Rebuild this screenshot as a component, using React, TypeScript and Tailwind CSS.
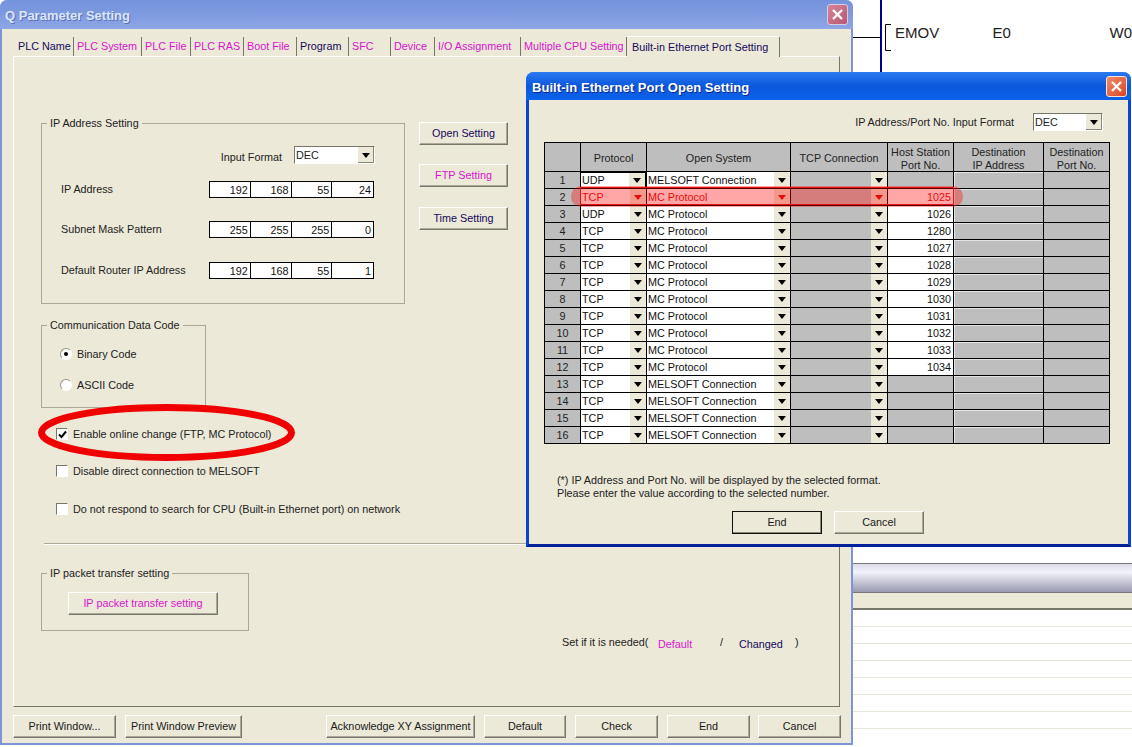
import type { ReactNode } from 'react';

const MAGENTA = 'text-[#d914cf]';
const NAVY = 'text-[#14085c]';

const tabs = [
  { label: 'PLC Name', w: 'w-[59px]', color: NAVY },
  { label: 'PLC System', w: 'w-[68px]', color: MAGENTA },
  { label: 'PLC File', w: 'w-[49px]', color: MAGENTA },
  { label: 'PLC RAS', w: 'w-[53px]', color: MAGENTA },
  { label: 'Boot File', w: 'w-[53px]', color: MAGENTA },
  { label: 'Program', w: 'w-[52px]', color: NAVY },
  { label: 'SFC', w: 'w-[42px]', color: MAGENTA },
  { label: 'Device', w: 'w-[44px]', color: MAGENTA },
  { label: 'I/O Assignment', w: 'w-[86px]', color: MAGENTA },
  { label: 'Multiple CPU Setting', w: 'w-[106px]', color: MAGENTA },
];

const ipRows = [
  { label: 'IP Address', values: ['192', '168', '55', '24'], mt: 'mt-[17px]' },
  { label: 'Subnet Mask Pattern', values: ['255', '255', '255', '0'], mt: 'mt-[23px]' },
  { label: 'Default Router IP Address', values: ['192', '168', '55', '1'], mt: 'mt-[24px]' },
];

const ports = [
  { proto: 'UDP', open: 'MELSOFT Connection', port: '' },
  { proto: 'TCP', open: 'MC Protocol', port: '1025' },
  { proto: 'UDP', open: 'MC Protocol', port: '1026' },
  { proto: 'TCP', open: 'MC Protocol', port: '1280' },
  { proto: 'TCP', open: 'MC Protocol', port: '1027' },
  { proto: 'TCP', open: 'MC Protocol', port: '1028' },
  { proto: 'TCP', open: 'MC Protocol', port: '1029' },
  { proto: 'TCP', open: 'MC Protocol', port: '1030' },
  { proto: 'TCP', open: 'MC Protocol', port: '1031' },
  { proto: 'TCP', open: 'MC Protocol', port: '1032' },
  { proto: 'TCP', open: 'MC Protocol', port: '1033' },
  { proto: 'TCP', open: 'MC Protocol', port: '1034' },
  { proto: 'TCP', open: 'MELSOFT Connection', port: '' },
  { proto: 'TCP', open: 'MELSOFT Connection', port: '' },
  { proto: 'TCP', open: 'MELSOFT Connection', port: '' },
  { proto: 'TCP', open: 'MELSOFT Connection', port: '' },
];

const Arrow = ({ red }: { red?: boolean }) => (
  <svg width="8" height="5" viewBox="0 0 8 5" className={red ? 'text-[#e01010]' : 'text-black'}>
    <path d="M0 0h8L4 5z" fill="currentColor" />
  </svg>
);

const Close = ({ active }: { active?: boolean }) => (
  <div
    className={`flex h-[21px] w-[21px] items-center justify-center rounded-[3px] border ${
      active
        ? 'border-[#f4e4dc] bg-gradient-to-br from-[#f08a68] to-[#d9431f]'
        : 'border-[#d9cbe0] bg-gradient-to-br from-[#d4869a] to-[#b8566f]'
    }`}
  >
    <svg width="13" height="13" viewBox="0 0 13 13">
      <path d="M2 2l9 9M11 2l-9 9" stroke="white" strokeWidth="2.4" />
    </svg>
  </div>
);

const Btn = ({ w, color, dflt, children }: { w: string; color?: string; dflt?: boolean; children: ReactNode }) => (
  <button
    className={`flex h-[23px] items-center justify-center bg-[#ece9d8] text-[10.8px] ${w} ${color ?? 'text-[#1a1a1a]'} ${
      dflt
        ? 'border border-[#111] shadow-[inset_-1px_-1px_0_#8a8874]'
        : 'border border-t-white border-l-white border-r-[#77766a] border-b-[#77766a] shadow-[inset_-1px_-1px_0_#aca899]'
    }`}
  >
    {children}
  </button>
);

const Group = ({ title, box, children }: { title: string; box: string; children: ReactNode }) => (
  <fieldset className={`border border-[#aaa794] ${box}`}>
    <legend className="ml-[5px] h-[14px] px-[3px] text-[10.8px] leading-[14px] text-[#222]">{title}</legend>
    {children}
  </fieldset>
);

const Combo = ({ w }: { w: string }) => (
  <div className={`flex h-[18px] items-center border border-t-[#77766a] border-l-[#77766a] border-r-white border-b-white bg-white pl-[1px] text-[10.8px] ${w}`}>
    <span className="flex-1">DEC</span>
    <span className="flex h-[16px] w-[16px] items-center justify-center bg-[#ece9d8] shadow-[inset_-1px_-1px_0_#8a8874]">
      <Arrow />
    </span>
  </div>
);

const Check = ({ label, checked, mt }: { label: string; checked?: boolean; mt: string }) => (
  <div className={`ml-[15px] flex h-[14px] items-center gap-[5px] text-[10.8px] text-[#222] ${mt}`}>
    <span className="flex h-[12px] w-[12px] items-center justify-center border border-t-[#77766a] border-l-[#77766a] border-r-white border-b-white bg-white">
      {checked && (
        <svg width="9" height="9" viewBox="0 0 9 9">
          <path d="M1 4.5l2.5 2.5L8 1.5" fill="none" stroke="black" strokeWidth="2" />
        </svg>
      )}
    </span>
    {label}
  </div>
);

const Radio = ({ label, on, mt }: { label: string; on?: boolean; mt: string }) => (
  <div className={`ml-[18px] flex h-[14px] items-center gap-[5px] text-[10.8px] text-[#222] ${mt}`}>
    <span className="flex h-[12px] w-[12px] items-center justify-center rounded-full border border-[#9a988a] border-r-white border-b-white bg-white">
      {on && <span className="h-[4px] w-[4px] rounded-full bg-black" />}
    </span>
    {label}
  </div>
);

const SelectCell = ({ text, grey, red, focus }: { text?: string; grey?: boolean; red?: boolean; focus?: boolean }) => (
  <div className={`flex h-full items-center ${grey ? 'bg-[#bebebe]' : 'bg-white'} ${focus ? 'border-r border-t border-black' : ''}`}>
    <span className={`flex-1 truncate pl-[1px] text-[10.8px] ${red ? 'text-[#e01010]' : 'text-[#111]'}`}>{text}</span>
    <span className="flex h-full w-[16px] items-center justify-center bg-[#ece9d8]">
      <Arrow red={red} />
    </span>
  </div>
);

const headCell = 'flex items-center justify-center bg-[#bebebe] pt-[2px] text-center text-[10.8px] leading-[13px] text-[#222]';
const headCell2 = 'flex items-center justify-center bg-[#bebebe] pt-[3px] text-center text-[10.8px] leading-[13px] text-[#222]';

function PortTable() {
  return (
    <div className="relative ml-[15px] mt-[11px] grid w-[566px] grid-cols-[35px_65px_143px_96px_65px_89px_65px] grid-rows-[28px_repeat(16,16px)] gap-[1px] border border-black bg-black">
      <div className={headCell} />
      <div className={headCell}>Protocol</div>
      <div className={headCell}>Open System</div>
      <div className={headCell}>TCP Connection</div>
      <div className={headCell2}>
        Host Station
        <br />
        Port No.
      </div>
      <div className={headCell2}>
        Destination
        <br />
        IP Address
      </div>
      <div className={headCell2}>
        Destination
        <br />
        Port No.
      </div>
      {ports.map((p, i) => {
        const red = i === 1;
        return (
          <div key={i} className="contents">
            <div className="flex items-center justify-center bg-[#bebebe] pt-[1px] text-[10.8px] text-[#222]">{i + 1}</div>
            <SelectCell text={p.proto} red={red} focus={i === 0} />
            <SelectCell text={p.open} red={red} />
            <SelectCell grey red={red} />
            <div
              className={`flex items-center justify-end pr-[2px] text-[10.8px] ${p.port ? 'bg-white' : 'bg-[#bebebe]'} ${
                red ? 'text-[#e01010]' : 'text-[#111]'
              }`}
            >
              {p.port}
            </div>
            <div className="border-l border-t border-[#e4e4e4] bg-[#bebebe]" />
            <div className="bg-[#bebebe]" />
          </div>
        );
      })}
      {/* red marker laid over row 2 */}
      <div className="pointer-events-none absolute left-[26px] top-[43px] h-[21px] w-[392px] rounded-[10px] bg-[#ff0000]/35" />
      <div className="pointer-events-none absolute left-[35px] top-[44px] h-[18px] w-[374px] border border-[#e81010]" />
    </div>
  );
}

function PortDialog() {
  return (
    <div className="absolute left-[526px] top-[72px] flex h-[475px] w-[605px] flex-col rounded-t-[8px] border-x-[3px] border-b-[3px] border-x-[#0a45cf] border-b-[#00209c] bg-[#ece9d8]">
      <div className="-mx-[3px] flex h-[28px] shrink-0 items-center justify-between rounded-t-[8px] bg-gradient-to-b from-[#2a7af0] via-[#0a58dc] to-[#0c62ea] pl-[6px] pr-[4px]">
        <span className="pt-[4px] text-[13px] font-bold tracking-[0.06px] text-white [text-shadow:1px_1px_0_#0a2a90]">Built-in Ethernet Port Open Setting</span>
        <Close active />
      </div>
      <div className="mt-[13px] flex items-center justify-end gap-[19px] pr-[25px] text-[10.8px] text-[#222]">
        <span className="pt-[1px]">IP Address/Port No. Input Format</span>
        <Combo w="w-[70px]" />
      </div>
      <PortTable />
      <div className="ml-[28px] mt-[30px] text-[10.8px] leading-[13px] text-[#222]">
        <p>(*) IP Address and Port No. will be displayed by the selected format.</p>
        <p>Please enter the value according to the selected number.</p>
      </div>
      <div className="ml-[203px] mt-[11px] flex gap-[12px]">
        <Btn w="w-[90px]" dflt>
          End
        </Btn>
        <Btn w="w-[90px]">Cancel</Btn>
      </div>
    </div>
  );
}

function ParameterWindow() {
  return (
    <div className="absolute left-0 top-0 flex h-[745px] w-[853px] flex-col rounded-t-[7px] border-x-2 border-b-2 border-[#7e93da] bg-[#ece9d8]">
      <div className="-mx-[2px] flex h-[29px] shrink-0 items-center justify-between rounded-t-[7px] bg-gradient-to-b from-[#7393dc] via-[#7f9ae0] to-[#8ea6e6] pl-[5px] pr-[5px]">
        <span className="pt-[2px] text-[13px] font-bold text-[#dce6f8] [text-shadow:1px_1px_0_#5870b8]">Q Parameter Setting</span>
        <Close />
      </div>

      {/* tabs */}
      <div className="ml-[13px] flex h-[27px] shrink-0 items-end">
        {tabs.map(t => (
          <div
            key={t.label}
            className={`flex h-[19px] items-center border-r border-r-[#77766a] pl-[3px] text-[10.8px] ${t.w} ${t.color}`}
          >
            {t.label}
          </div>
        ))}
        <div className={`relative z-10 -mb-[1px] flex h-[21px] w-[153px] items-center rounded-t-[2px] border-r border-t border-r-[#77766a] border-t-white bg-[#ece9d8] pl-[5px] text-[10.8px] ${NAVY}`}>
          Built-in Ethernet Port Setting
        </div>
      </div>

      {/* tab panel */}
      <div className="ml-[11px] flex h-[651px] w-[827px] shrink-0 flex-col border border-t-white border-l-white border-r-[#77766a] border-b-[#77766a] pl-[27px] pt-[59px]">
        <div className="flex items-start gap-[14px]">
          <Group title="IP Address Setting" box="h-[188px] w-[364px]">
            <div className="mt-[16px] flex items-center justify-end gap-[12px] pr-[29px] text-[10.8px] leading-[14px] text-[#222]">
              <span className="pt-[3px]">Input Format</span>
              <Combo w="w-[81px]" />
            </div>
            {ipRows.map(r => (
              <div key={r.label} className={`flex h-[17px] items-center pl-[19px] text-[10.8px] text-[#222] ${r.mt}`}>
                <span className="w-[148px]">{r.label}</span>
                <div className="grid h-full w-[165px] grid-cols-4 border border-black bg-white">
                  {r.values.map((v, i) => (
                    <span key={i} className="border-r border-black pr-[2px] text-right leading-[16px] text-[#111] last:border-r-0">
                      {v}
                    </span>
                  ))}
                </div>
              </div>
            ))}
          </Group>
          <div className="mt-[6px] flex flex-col">
            <Btn w="w-[89px]" color={NAVY}>
              Open Setting
            </Btn>
            <div className="mt-[19px]">
              <Btn w="w-[89px]" color={MAGENTA}>
                FTP Setting
              </Btn>
            </div>
            <div className="mt-[20px]">
              <Btn w="w-[89px]" color={NAVY}>
                Time Setting
              </Btn>
            </div>
          </div>
        </div>

        <div className="mt-[14px]">
          <Group title="Communication Data Code" box="h-[90px] w-[165px]">
            <Radio label="Binary Code" on mt="mt-[15px]" />
            <Radio label="ASCII Code" mt="mt-[17px]" />
          </Group>
        </div>

        <Check label="Enable online change (FTP, MC Protocol)" checked mt="mt-[19px]" />
        <Check label="Disable direct connection to MELSOFT" mt="mt-[23px]" />
        <Check label="Do not respond to search for CPU (Built-in Ethernet port) on network" mt="mt-[24px]" />

        <div className="ml-[3px] mt-[27px] h-[2px] border-t border-[#aca899] bg-white" />

        <div className="mt-[21px]">
          <Group title="IP packet transfer setting" box="h-[65px] w-[208px]">
            <div className="ml-[26px] mt-[12px]">
              <Btn w="w-[150px]" color={MAGENTA}>
                IP packet transfer setting
              </Btn>
            </div>
          </Group>
        </div>

        <div className="ml-[521px] mt-[3px] flex text-[10.8px] text-[#222]">
          <span className="w-[96px]">Set if it is needed(</span>
          <span className={`mt-[2px] w-[62px] ${MAGENTA}`}>Default</span>
          <span className="w-[19px]">/</span>
          <span className={`mt-[2px] w-[56px] ${NAVY}`}>Changed</span>
          <span>)</span>
        </div>
      </div>

      {/* bottom buttons */}
      <div className="ml-[11px] mt-[8px] flex">
        <Btn w="w-[103px]">Print Window...</Btn>
        <div className="ml-[9px]">
          <Btn w="w-[117px]">Print Window Preview</Btn>
        </div>
        <div className="ml-[84px]">
          <Btn w="w-[149px]">Acknowledge XY Assignment</Btn>
        </div>
        <div className="ml-[9px]">
          <Btn w="w-[82px]">Default</Btn>
        </div>
        <div className="ml-[9px]">
          <Btn w="w-[83px]">Check</Btn>
        </div>
        <div className="ml-[9px]">
          <Btn w="w-[83px]">End</Btn>
        </div>
        <div className="ml-[8px]">
          <Btn w="w-[83px]">Cancel</Btn>
        </div>
      </div>
    </div>
  );
}

function LadderBackground() {
  return (
    <div className="ml-[853px] flex h-[747px] flex-col">
      <div className="relative h-[563px] shrink-0">
        <svg width="279" height="72" className="absolute left-0 top-0">
          <path d="M0 37.5H27" stroke="black" fill="none" />
          <path d="M28 0V72" stroke="#00008c" strokeWidth="2" fill="none" />
          <path d="M38 24.5H32.5V50.5H38" stroke="black" fill="none" />
        </svg>
        <div className="flex pt-[24px] text-[15px] leading-[18px] text-[#222]">
          <span className="ml-[42px] w-[99px]">EMOV</span>
          <span className="w-[119px]">E0</span>
          <span>W0</span>
        </div>
      </div>
      <div className="h-[30px] shrink-0 border-y border-y-[#77767a] bg-gradient-to-b from-[#dedeea] via-[#f2f2fb] via-30% to-[#9a9ab0]" />
      <div className="h-[17px] shrink-0 border-b-2 border-b-[#77766a] bg-[#ece9d8]" />
      {[0, 1, 2, 3, 4, 5, 6].map(i => (
        <div key={i} className="h-[17px] shrink-0 border-b border-b-[#e8e6da]" />
      ))}
    </div>
  );
}

export default function App() {
  return (
    <div className="relative h-[747px] w-[1132px] overflow-hidden bg-white font-['Liberation_Sans',Arial,sans-serif]">
      <LadderBackground />
      <ParameterWindow />
      <PortDialog />
      {/* hand-drawn red circle on the screenshot */}
      <svg width="270" height="70" className="absolute left-[32px] top-[398px]">
        <ellipse cx="134.5" cy="34.5" rx="125" ry="25" fill="none" stroke="#f00000" strokeWidth="7" />
      </svg>
    </div>
  );
}
